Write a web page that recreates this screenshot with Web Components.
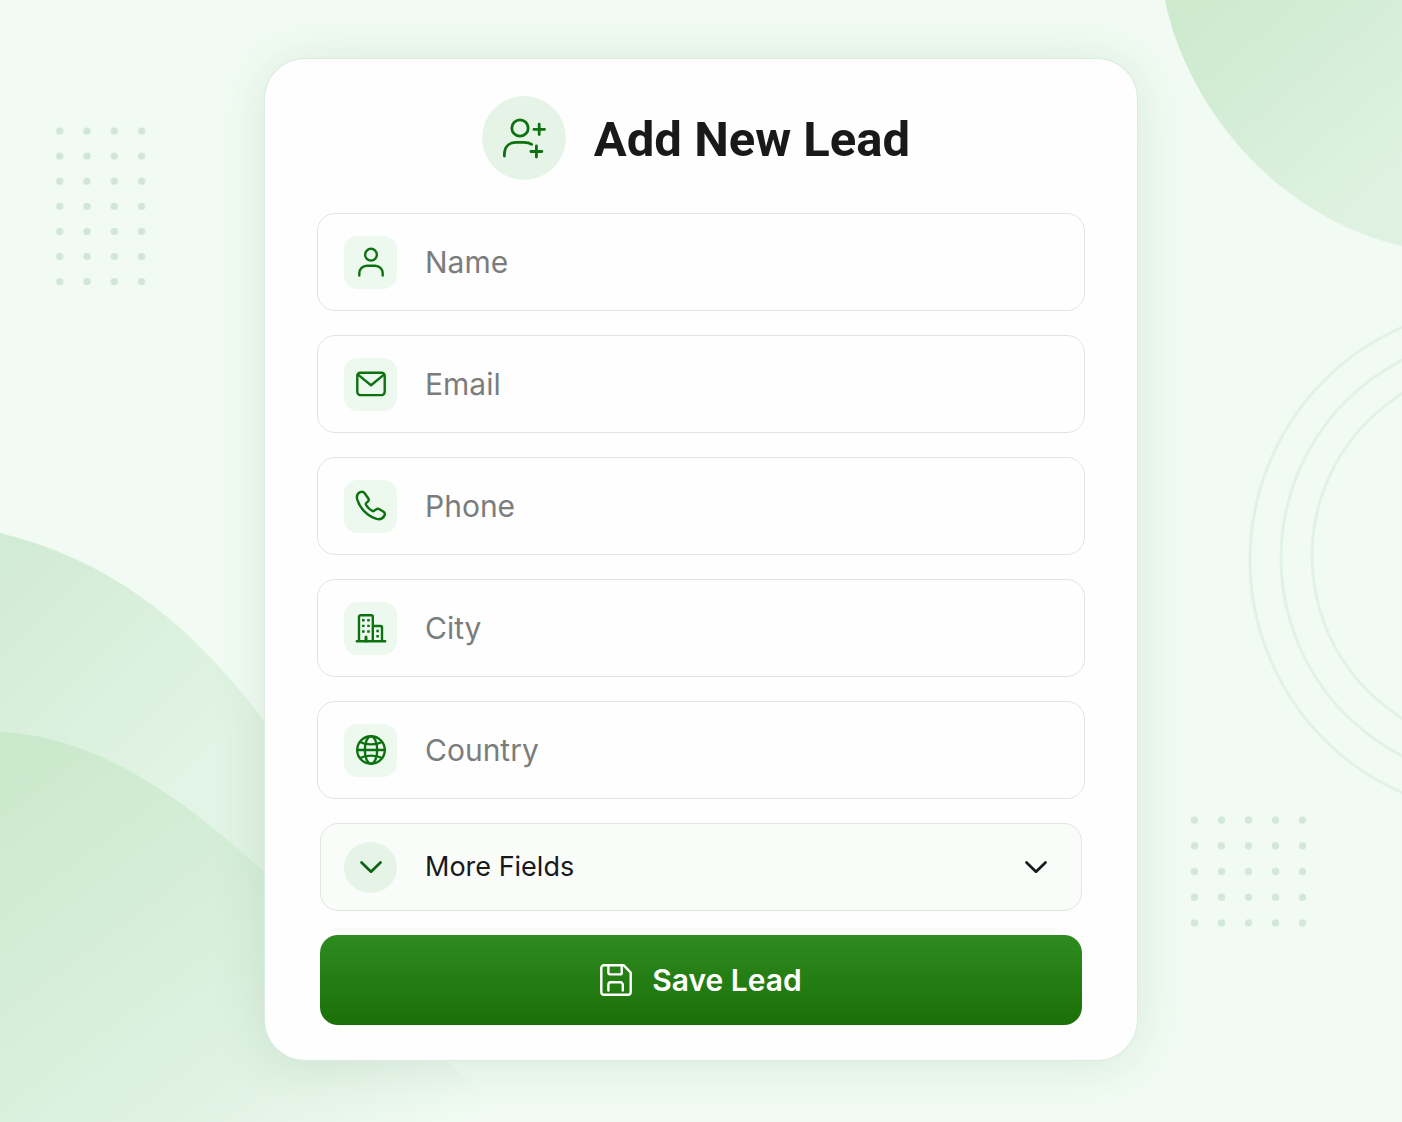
<!DOCTYPE html>
<html lang="en">
<head>
<meta charset="utf-8">
<meta name="viewport" content="width=device-width, initial-scale=1">
<title>Add New Lead</title>
<style>
  body {
    margin: 0;
    font-family: Inter, 'Liberation Sans', sans-serif;
    color: #17191a;
    background: #f1fbf3;
  }
</style>
</head>
<body>
<lead-page>
  <lead-card heading="Add New Lead">
    <lead-field icon="user" name="name" placeholder="Name"></lead-field>
    <lead-field icon="mail" name="email" type="email" placeholder="Email"></lead-field>
    <lead-field icon="phone" name="phone" type="tel" placeholder="Phone"></lead-field>
    <lead-field icon="building" name="city" placeholder="City"></lead-field>
    <lead-field icon="globe" name="country" placeholder="Country"></lead-field>
    <lead-more>More Fields</lead-more>
    <lead-submit>Save Lead</lead-submit>
  </lead-card>
</lead-page>

<script>
const ICONS = {
  'user-plus': `
    <g stroke-width="2.8">
      <circle cx="18" cy="11" r="8.2"/>
      <path d="M2.4 39v-1.5c0-8 5-12.2 12-12.2h7.4c3 0 5.7.5 7.9 2"/>
      <path d="M37.2 7.2v10.4M31.9 12.4h10.6M34.4 29v11M28.9 34.5h11"/>
    </g>`,
  user: `
    <circle cx="16" cy="8.7" r="5.9"/>
    <path d="M4.3 29.5v-2.2a7.6 7.6 0 0 1 7.6-7.6h8.2a7.6 7.6 0 0 1 7.6 7.6v2.2"/>`,
  mail: `
    <rect x="2.3" y="4.7" width="27.4" height="22.4" rx="3"/>
    <path d="M3 6.6l13 10.6 13-10.6"/>`,
  phone: `
    <path d="M5.2 2.2C7 1.4 8.6 1.8 9.6 3.2L13.2 8.2C14 9.4 13.9 10.4 13 11.4L11.3 13C10.8 13.6 10.7 14.2 11 14.8C12.6 17.4 14.8 19.6 17.4 21C18 21.3 18.6 21.2 19.1 20.8L21 19.4C22 18.7 23.2 18.6 24.4 19.2L28.2 21.6C29.9 22.7 30.2 24.4 29.2 26C27.6 28.6 25 29.8 21.6 28.8C12.4 26.2 4.6 18 2.2 9.4C1.4 6.2 2.6 3.4 5.2 2.2Z"/>`,
  building: `
    <path d="M1.8 29.3h28.4M4 29V4.8a1.5 1.5 0 0 1 1.5-1.5h10.8a1.5 1.5 0 0 1 1.5 1.5V29M17.8 14h7.7a1.5 1.5 0 0 1 1.5 1.5V29"/>
    <path d="M11 25v4" stroke-width="3"/>
    <path d="M8.3 7v2.4M13.5 7v2.4M8.3 12.7v2.4M13.5 12.7v2.4M8.3 18.3v2.4M13.5 18.3v2.4M22.6 17.8v2.4M22.6 23v2.4" stroke-width="2.6" stroke-linecap="butt"/>`,
  globe: `
    <circle cx="16" cy="16" r="13.8"/>
    <ellipse cx="16" cy="16" rx="6.2" ry="13.8"/>
    <path d="M2.2 16h27.6M5 8c6 3.2 16 3.2 22 0M5 24c6-3.2 16-3.2 22 0"/>`,
  chevron: `<path d="M6.5 11.5l9.5 9.2 9.5-9.2" stroke-width="2.7"/>`,
  save: `
    <path d="M4 1.3h19.8l6.9 7.2V28a2.7 2.7 0 0 1-2.7 2.7H4A2.7 2.7 0 0 1 1.3 28V4A2.7 2.7 0 0 1 4 1.3Z"/>
    <path d="M8.4 1.5V9a1.4 1.4 0 0 0 1.4 1.4h10.5A1.4 1.4 0 0 0 21.7 9V1.5M8.4 26.5v-5.8a2.4 2.4 0 0 1 2.4-2.4h9.6a2.4 2.4 0 0 1 2.4 2.4v5.8"/>`
};

function define(name, html, setup) {
  const template = document.createElement('template');
  template.innerHTML = html;
  customElements.define(name, class extends HTMLElement {
    constructor() {
      super();
      this.attachShadow({ mode: 'open' });
      this.shadowRoot.appendChild(template.content.cloneNode(true));
    }
    connectedCallback() {
      if (setup) setup(this, this.shadowRoot);
    }
  });
}

const iconTemplate = document.createElement('template');
iconTemplate.innerHTML = `
  <style>
    :host { display: block; flex: none; width: 32px; height: 32px; }
    svg {
      display: block;
      width: 100%;
      height: 100%;
      fill: none;
      stroke: currentColor;
      stroke-width: 2.4;
      stroke-linecap: round;
      stroke-linejoin: round;
    }
  </style>
  <svg viewBox="0 0 32 32" aria-hidden="true"></svg>
`;

class LeadIcon extends HTMLElement {
  static get observedAttributes() {
    return ['name'];
  }

  constructor() {
    super();
    this.attachShadow({ mode: 'open' });
    this.shadowRoot.appendChild(iconTemplate.content.cloneNode(true));
    this._svg = this.shadowRoot.querySelector('svg');
  }

  attributeChangedCallback(attr, oldVal, newVal) {
    this._svg.setAttribute('viewBox', newVal === 'user-plus' ? '0 0 44 42' : '0 0 32 32');
    this._svg.innerHTML = ICONS[newVal] || '';
  }
}

customElements.define('lead-icon', LeadIcon);

define('lead-backdrop', `
  <style>
    :host { display: block; overflow: hidden; }
    svg { display: block; width: 100%; height: 100%; }
  </style>
  <svg viewBox="0 0 1402 1122" preserveAspectRatio="xMidYMid slice" aria-hidden="true">
    <defs>
      <linearGradient id="corner" gradientUnits="userSpaceOnUse" x1="1190" y1="20" x2="1350" y2="210">
        <stop offset="0" stop-color="#cdeacf"/>
        <stop offset="1" stop-color="#dff2e1"/>
      </linearGradient>
      <linearGradient id="hill-back" gradientUnits="userSpaceOnUse" x1="0" y1="560" x2="200" y2="760">
        <stop offset="0" stop-color="#d2ebd4"/>
        <stop offset="1" stop-color="#e2f4e5"/>
      </linearGradient>
      <linearGradient id="hill-front" gradientUnits="userSpaceOnUse" x1="0" y1="780" x2="338" y2="1225">
        <stop offset="0" stop-color="#cbe9cd"/>
        <stop offset="0.7" stop-color="#e1f3e4"/>
        <stop offset="1" stop-color="#f1fbf3"/>
      </linearGradient>
      <pattern id="dots-left" patternUnits="userSpaceOnUse" x="46" y="118" width="27.3" height="25.1">
        <circle cx="13.7" cy="13" r="3.7" fill="#d1e6d6"/>
      </pattern>
      <pattern id="dots-right" patternUnits="userSpaceOnUse" x="1181" y="807" width="27" height="25.7">
        <circle cx="13.5" cy="13" r="3.7" fill="#d3e8d8"/>
      </pattern>
    </defs>
    <rect width="1402" height="1122" fill="#f1fbf3"/>
    <path d="M1165 0C1185 100 1270 215 1402 246V0Z" fill="url(#corner)"/>
    <path d="M0 533C110 560 190 622 265 722L400 900V1000H0Z" fill="url(#hill-back)"/>
    <path d="M0 732C90 736 170 786 265 873C350 950 420 1050 520 1122H0Z" fill="url(#hill-front)"/>
    <g fill="none" stroke="#e2f2e4" stroke-width="3">
      <circle cx="1504" cy="560" r="254"/>
      <circle cx="1503" cy="558" r="222"/>
      <circle cx="1503" cy="556" r="191"/>
    </g>
    <rect x="46" y="118" width="109" height="175" fill="url(#dots-left)"/>
    <rect x="1181" y="807" width="135" height="128" fill="url(#dots-right)"/>
  </svg>
`);

define('lead-page', `
  <style>
    :host {
      display: block;
      position: relative;
      min-height: 100vh;
      box-sizing: border-box;
      padding: 59px 24px 62px;
    }
    lead-backdrop { position: absolute; inset: 0; }
    main { position: relative; max-width: 872px; margin: 0 auto; }
  </style>
  <lead-backdrop></lead-backdrop>
  <main><slot></slot></main>
`);

define('lead-card', `
  <style>
    :host {
      display: block;
      box-sizing: border-box;
      padding: 37px 52px 35px;
      border-radius: 40px;
      background: #fefefe;
      box-shadow: 0 0 0 1px #dcebdf, 0 4px 52px rgba(60, 120, 70, 0.14);
    }
    header {
      display: flex;
      align-items: center;
      justify-content: center;
      gap: 28px;
      margin-bottom: 33px;
      padding-right: 10px;
    }
    .badge {
      display: flex;
      align-items: center;
      justify-content: center;
      flex: none;
      width: 84px;
      height: 84px;
      border-radius: 50%;
      background: #e6f4e8;
      color: #0c7210;
    }
    .badge lead-icon { width: 44px; height: 42px; }
    h1 {
      margin: 0;
      padding-top: 4px;
      font: 700 49px/56px Roboto, 'Liberation Sans', sans-serif;
    }
    form {
      display: flex;
      flex-direction: column;
      gap: 24px;
    }
  </style>
  <header>
    <span class="badge"><lead-icon name="user-plus"></lead-icon></span>
    <h1></h1>
  </header>
  <form><slot></slot></form>
`, (el, root) => {
  root.querySelector('h1').textContent = el.getAttribute('heading');
  root.querySelector('form').addEventListener('submit', (e) => e.preventDefault());
});

define('lead-field', `
  <style>
    :host { display: block; }
    label {
      display: flex;
      align-items: center;
      gap: 28px;
      height: 98px;
      box-sizing: border-box;
      padding: 0 26px;
      border: 1px solid #e2e4e3;
      border-radius: 18px;
      background: #fefefe;
      cursor: text;
    }
    label:focus-within { border-color: #2b8a1e; }
    .tile {
      display: flex;
      align-items: center;
      justify-content: center;
      flex: none;
      width: 53px;
      height: 53px;
      border-radius: 14px;
      background: #edf8ee;
      color: #0c7210;
    }
    input {
      flex: 1;
      min-width: 0;
      padding: 0;
      border: 0;
      outline: 0;
      background: none;
      color: #17191a;
      font: 400 30px/40px Inter, 'Liberation Sans', sans-serif;
    }
    input::placeholder { color: #7b7d7c; opacity: 1; }
  </style>
  <label>
    <span class="tile"><lead-icon></lead-icon></span>
    <input type="text">
  </label>
`, (el, root) => {
  const input = root.querySelector('input');
  input.type = el.getAttribute('type') || 'text';
  input.name = el.getAttribute('name');
  input.placeholder = el.getAttribute('placeholder');
  input.setAttribute('aria-label', input.placeholder);
  root.querySelector('lead-icon').setAttribute('name', el.getAttribute('icon'));
});

define('lead-more', `
  <style>
    :host { display: block; margin: 0 3px; }
    button {
      display: flex;
      align-items: center;
      gap: 28px;
      width: 100%;
      height: 88px;
      box-sizing: border-box;
      padding: 0 29px 0 23px;
      border: 1px solid #e2e6e3;
      border-radius: 18px;
      background: #f9fcf9;
      color: #17191a;
      font: 400 27px/36px Inter, 'Liberation Sans', sans-serif;
      text-align: left;
      cursor: pointer;
    }
    .label { flex: 1; }
    .dot {
      display: flex;
      align-items: center;
      justify-content: center;
      flex: none;
      width: 53px;
      height: 51px;
      border-radius: 50%;
      background: #e6f4e8;
      color: #0c6410;
    }
  </style>
  <button type="button" aria-expanded="false">
    <span class="dot"><lead-icon name="chevron"></lead-icon></span>
    <span class="label"><slot></slot></span>
    <lead-icon name="chevron"></lead-icon>
  </button>
`, (el, root) => {
  const button = root.querySelector('button');
  button.addEventListener('click', () => {
    const open = button.getAttribute('aria-expanded') === 'true';
    button.setAttribute('aria-expanded', String(!open));
  });
});

define('lead-submit', `
  <style>
    :host { display: block; margin: 0 3px; }
    button {
      display: flex;
      align-items: center;
      justify-content: center;
      gap: 20px;
      width: 100%;
      height: 90px;
      padding: 0;
      border: 0;
      border-radius: 18px;
      background: linear-gradient(#2e8b1f, #1b7008);
      color: #fff;
      font: 600 30px/40px Inter, 'Liberation Sans', sans-serif;
      cursor: pointer;
    }
  </style>
  <button type="submit">
    <lead-icon name="save"></lead-icon>
    <span><slot></slot></span>
  </button>
`);
</script>
</body>
</html>
